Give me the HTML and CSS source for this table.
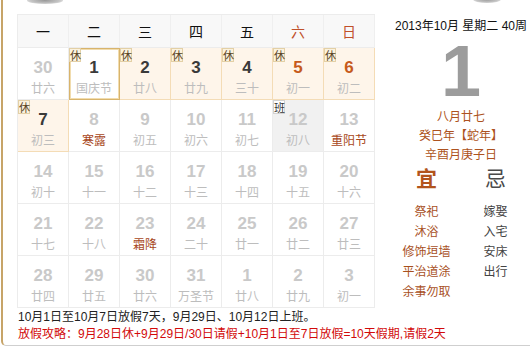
FILE: index.html
```html
<!DOCTYPE html>
<html lang="zh-CN">
<head>
<meta charset="utf-8">
<title>万年历</title>
<link rel="stylesheet" href="styles.css">
</head>
<body>
<div class="frame">
  <span class="blob blob-a"></span>
  <span class="blob blob-b"></span>
  <div class="main">
    <div class="cal">
      <div class="grid">
        <div class="wk">一</div><div class="wk">二</div><div class="wk">三</div><div class="wk">四</div><div class="wk">五</div><div class="wk we">六</div><div class="wk we">日</div>

        <div class="day"><span class="num">30</span><span class="lun">廿六</span></div>
        <div class="day today"><span class="tag">休</span><span class="num dark">1</span><span class="lun">国庆节</span></div>
        <div class="day hol"><span class="tag">休</span><span class="num dark">2</span><span class="lun">廿八</span></div>
        <div class="day hol"><span class="tag">休</span><span class="num dark">3</span><span class="lun">廿九</span></div>
        <div class="day hol"><span class="tag">休</span><span class="num dark">4</span><span class="lun">三十</span></div>
        <div class="day hol"><span class="tag">休</span><span class="num orange">5</span><span class="lun">初一</span></div>
        <div class="day hol"><span class="tag">休</span><span class="num orange">6</span><span class="lun">初二</span></div>

        <div class="day hol"><span class="tag">休</span><span class="num dark">7</span><span class="lun">初三</span></div>
        <div class="day"><span class="num">8</span><span class="lun fest">寒露</span></div>
        <div class="day"><span class="num">9</span><span class="lun">初五</span></div>
        <div class="day"><span class="num">10</span><span class="lun">初六</span></div>
        <div class="day"><span class="num">11</span><span class="lun">初七</span></div>
        <div class="day work"><span class="tag tag-work">班</span><span class="num">12</span><span class="lun">初八</span></div>
        <div class="day"><span class="num">13</span><span class="lun fest">重阳节</span></div>

        <div class="day"><span class="num">14</span><span class="lun">初十</span></div>
        <div class="day"><span class="num">15</span><span class="lun">十一</span></div>
        <div class="day"><span class="num">16</span><span class="lun">十二</span></div>
        <div class="day"><span class="num">17</span><span class="lun">十三</span></div>
        <div class="day"><span class="num">18</span><span class="lun">十四</span></div>
        <div class="day"><span class="num">19</span><span class="lun">十五</span></div>
        <div class="day"><span class="num">20</span><span class="lun">十六</span></div>

        <div class="day"><span class="num">21</span><span class="lun">十七</span></div>
        <div class="day"><span class="num">22</span><span class="lun">十八</span></div>
        <div class="day"><span class="num">23</span><span class="lun fest">霜降</span></div>
        <div class="day"><span class="num">24</span><span class="lun">二十</span></div>
        <div class="day"><span class="num">25</span><span class="lun">廿一</span></div>
        <div class="day"><span class="num">26</span><span class="lun">廿二</span></div>
        <div class="day"><span class="num">27</span><span class="lun">廿三</span></div>

        <div class="day"><span class="num">28</span><span class="lun">廿四</span></div>
        <div class="day"><span class="num">29</span><span class="lun">廿五</span></div>
        <div class="day"><span class="num">30</span><span class="lun">廿六</span></div>
        <div class="day"><span class="num">31</span><span class="lun">万圣节</span></div>
        <div class="day"><span class="num">1</span><span class="lun">廿八</span></div>
        <div class="day"><span class="num">2</span><span class="lun">廿九</span></div>
        <div class="day"><span class="num">3</span><span class="lun">初一</span></div>
      </div>
      <div class="notes">
        <p class="note">10月1日至10月7日放假7天，9月29日、10月12日上班。</p>
        <p class="note red">放假攻略：9月28日休+9月29日/30日请假+10月1日至7日放假=10天假期,请假2天</p>
      </div>
    </div>
    <div class="side">
      <div class="dateline">2013年10月 星期二 40周</div>
      <div class="bigday">1</div>
      <div class="lunar">
        <div>八月廿七</div>
        <div>癸巳年【蛇年】</div>
        <div>辛酉月庚子日</div>
      </div>
      <div class="yiji">
        <div class="col yi">
          <div class="head">宜</div>
          <div class="items">
            <div>祭祀</div><div>沐浴</div><div>修饰垣墙</div><div>平治道涂</div><div>余事勿取</div>
          </div>
        </div>
        <div class="col ji">
          <div class="head">忌</div>
          <div class="items">
            <div>嫁娶</div><div>入宅</div><div>安床</div><div>出行</div>
          </div>
        </div>
      </div>
    </div>
  </div>
</div>
</body>
</html>
```

FILE: styles.css
```css
* { box-sizing: border-box; }
html, body {
  margin: 0;
  padding: 0;
  background: #fff;
}
body {
  font-family: "Liberation Sans", "Noto Sans CJK SC", sans-serif;
  font-size: 12px;
  color: #222;
  width: 530px;
  height: 348px;
  overflow: hidden;
}
.frame {
  position: relative;
  margin-left: 1px;
  height: 346px;
  border-left: 2px solid #c7a468;
  border-bottom: 1px solid #cfcfcf;
  border-bottom-left-radius: 5px;
}
.blob {
  position: absolute;
  top: -3px;
  height: 7px;
  border-radius: 50%;
  background: radial-gradient(ellipse at center, #9a9a9a 0%, #c4c4c4 55%, rgba(255,255,255,0) 100%);
}
.blob-a { left: 24px; width: 36px; }
.blob-b { left: 470px; width: 28px; top: -4px; }

.main {
  display: flex;
  align-items: flex-start;
}
.cal {
  padding-left: 14px;
  padding-top: 14px;
  width: 372px;
  flex: none;
}
.grid {
  display: grid;
  grid-template-columns: repeat(7, 51px);
  grid-auto-rows: 52px;
  grid-template-rows: 33px;
  border-left: 1px solid #ececec;
  border-top: 1px solid #ececec;
  width: 358px;
}
.wk {
  background: #f8f8f8;
  border-right: 1px solid #efefef;
  border-bottom: 1px solid #ececec;
  font-family: "Noto Sans CJK SC", sans-serif;
  font-size: 14px;
  line-height: 32px;
  text-align: center;
  color: #111;
}
.wk.we { color: #c0502a; }

.day {
  position: relative;
  display: flex;
  flex-direction: column;
  align-items: center;
  border-right: 1px solid #ececec;
  border-bottom: 1px solid #ececec;
  background: #fff;
}
.day.hol {
  background: #fef5ea;
  border-right-color: #f4dcb6;
  border-bottom-color: #f4dcb6;
}
.day.today {
  background: #fff;
  border-right-color: #d8b46c;
  border-bottom-color: #d8b46c;
  box-shadow: inset 1px 1px 0 #d8b46c, inset -1px -1px 0 #f1dcae, inset 2px 2px 0 #f1dcae;
}
.day.work { background: #f1f1f1; }

.num {
  margin-top: 10px;
  font-family: "Liberation Sans", sans-serif;
  font-weight: bold;
  font-size: 17px;
  line-height: 20px;
  color: #c9c9c9;
}
.num.dark { color: #3a3a3a; }
.num.orange { color: #c65a1c; }
.lun {
  margin-top: 2px;
  font-family: "Noto Sans CJK SC", sans-serif;
  font-size: 12px;
  line-height: 16px;
  color: #bdbdbd;
}
.lun.fest { color: #a8471b; }

.tag {
  position: absolute;
  left: 0;
  top: 0;
  width: 12px;
  height: 14px;
  font-family: "Noto Sans CJK SC", sans-serif;
  font-size: 11px;
  line-height: 12px;
  text-align: center;
  color: #5a4424;
  background: #fbf2de;
  border: 1px solid #e3d0a6;
}
.tag-work {
  background: #fff;
  border-color: #d2d2d2;
  color: #333;
}

.notes {
  margin-top: 1px;
  padding-left: 1px;
}
.note {
  margin: 0;
  font-size: 12px;
  line-height: 17px;
  color: #222;
  white-space: nowrap;
}
.note.red { color: #d20a0a; }

.side {
  margin-left: 17px;
  width: 138px;
  flex: none;
  padding-top: 18px;
  text-align: center;
}
.dateline {
  font-size: 12px;
  line-height: 17px;
  color: #111;
  white-space: nowrap;
}
.bigday {
  margin-top: 8px;
  margin-bottom: 7px;
  font-family: "Liberation Sans", sans-serif;
  font-weight: bold;
  font-size: 72px;
  line-height: 56px;
  color: #9c9c9c;
}
.lunar {
  font-family: "Noto Sans CJK SC", sans-serif;
  font-size: 12px;
  line-height: 19px;
  color: #ad5220;
}
.yiji {
  display: grid;
  grid-template-columns: 1fr 1fr;
}
.head {
  font-family: "Noto Sans CJK SC", sans-serif;
  font-size: 21px;
  font-weight: bold;
  line-height: 28px;
}
.yi .head { color: #b2541c; }
.ji .head { color: #4a4a4a; font-weight: normal; }
.items {
  margin-top: 10px;
  font-family: "Noto Sans CJK SC", sans-serif;
  font-size: 12px;
  line-height: 20px;
}
.yi .items { color: #a8501e; }
.ji .items { color: #444; }
```
